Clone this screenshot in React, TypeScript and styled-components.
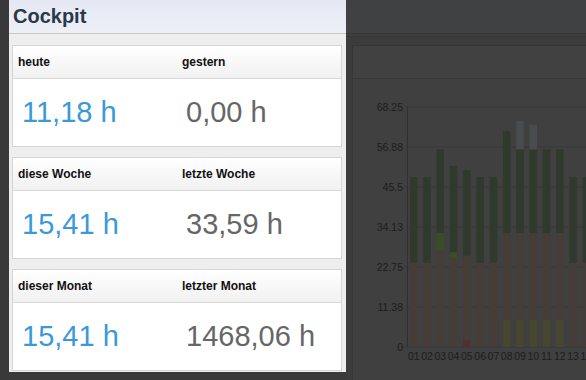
import styled, { createGlobalStyle } from 'styled-components';

const GlobalStyle = createGlobalStyle`
  html, body {
    margin: 0;
    padding: 0;
    background: #3a3a3a;
  }
  body {
    font-family: 'Liberation Sans', Arial, Helvetica, sans-serif;
  }
`;

interface Stat {
  label: string;
  value: string;
}

interface Pair {
  current: Stat;
  previous: Stat;
}

const stats: Pair[] = [
  { current: { label: 'heute', value: '11,18 h' }, previous: { label: 'gestern', value: '0,00 h' } },
  { current: { label: 'diese Woche', value: '15,41 h' }, previous: { label: 'letzte Woche', value: '33,59 h' } },
  { current: { label: 'dieser Monat', value: '15,41 h' }, previous: { label: 'letzter Monat', value: '1468,06 h' } },
];

// bar segments from the bottom up: [value, colour]
type Segment = [number, string];

const GREEN = '#2f392c';
const LIGHT_GREEN = '#3a4d25';
const ORANGE = '#463d38';
const YELLOW = '#47462f';
const RED = '#552f2d';
const GREY = '#494c4f';

const bars: Segment[][] = [
  [[24, ORANGE], [24.3, GREEN]],
  [[24, ORANGE], [24.3, GREEN]],
  [[27.6, ORANGE], [4.8, LIGHT_GREEN], [23.8, GREEN]],
  [[25.3, ORANGE], [1.7, LIGHT_GREEN], [24.5, GREEN]],
  [[2, RED], [24, ORANGE], [24.3, GREEN]],
  [[24, ORANGE], [24.3, GREEN]],
  [[24, ORANGE], [24.3, GREEN]],
  [[7.7, YELLOW], [24.7, ORANGE], [29, GREEN]],
  [[7.7, YELLOW], [24.7, ORANGE], [23.8, GREEN], [8.1, GREY]],
  [[7.7, YELLOW], [24.7, ORANGE], [23.8, GREEN], [7, GREY]],
  [[7.7, YELLOW], [24.7, ORANGE], [23.8, GREEN]],
  [[7.7, YELLOW], [24.7, ORANGE], [23.8, GREEN]],
  [[24, ORANGE], [24.3, GREEN]],
  [[24, ORANGE], [24.3, GREEN]],
];

const ticks = ['0', '11.38', '22.75', '34.13', '45.5', '56.88', '68.25'];

const ZERO_Y = 347;
const PX_PER_UNIT = 240 / 68.25;
const BAR_X = 410;
const BAR_STEP = 13.28;
const BAR_W = 7.5;

const Chart = () => {
  return (
    <ChartSvg width={240} height={301} viewBox="353 79 240 301">
      {ticks.map((t, i) => {
        const y = ZERO_Y - i * 40;
        return (
          <g key={t}>
            <line x1={404} x2={593} y1={y} y2={y} stroke="#393939" strokeWidth={1} />
            <text x={403} y={y + 3.5} textAnchor="end" fontSize={10.5} fill="#1c1c1c">
              {t}
            </text>
          </g>
        );
      })}
      <line x1={407.5} x2={407.5} y1={107} y2={ZERO_Y} stroke="#2f2f2f" strokeWidth={1} />
      {bars.map((segments, i) => {
        const x = BAR_X + i * BAR_STEP;
        let base = 0;
        return (
          <g key={i}>
            {segments.map(([v, colour], j) => {
              const yTop = ZERO_Y - (base + v) * PX_PER_UNIT;
              const h = v * PX_PER_UNIT;
              base += v;
              return <rect key={j} x={x} y={yTop} width={BAR_W} height={h} fill={colour} />;
            })}
            <text x={x + BAR_W / 2} y={360} textAnchor="middle" fontSize={10.5} fill="#1c1c1c">
              {String(i + 1).padStart(2, '0')}
            </text>
          </g>
        );
      })}
    </ChartSvg>
  );
};

const Card = ({ pair }: { pair: Pair }) => (
  <CardBox>
    <CardHead>
      <HeadCell>{pair.current.label}</HeadCell>
      <HeadCell>{pair.previous.label}</HeadCell>
    </CardHead>
    <CardBody>
      <Value $current>{pair.current.value}</Value>
      <Value>{pair.previous.value}</Value>
    </CardBody>
  </CardBox>
);

const App = () => {
  return (
    <>
      <GlobalStyle />
      <Page>
        <Strip />
        <Panel>
          <PanelHeader>
            <Title>Cockpit</Title>
          </PanelHeader>
          <PanelBody>
            {stats.map((pair) => (
              <Card key={pair.current.label} pair={pair} />
            ))}
          </PanelBody>
        </Panel>
        <Backdrop>
          <TopBar />
          <BackdropBody>
            <DimPanel>
              <DimPanelHead />
              <Chart />
            </DimPanel>
          </BackdropBody>
        </Backdrop>
      </Page>
    </>
  );
};

export default App;

const Page = styled.div`
  display: flex;
  width: 586px;
  height: 380px;
  overflow: hidden;
  background: #3a3a3a;
`;

const Strip = styled.div`
  width: 9px;
  flex-shrink: 0;
  background: #393939;
`;

const Panel = styled.div`
  width: 337px;
  flex-shrink: 0;
  align-self: flex-start;
  display: flex;
  flex-direction: column;
  background: #eeeeee;
`;

const PanelHeader = styled.div`
  height: 33px;
  display: flex;
  align-items: center;
  padding-left: 4px;
  background: linear-gradient(#e5e8f3, #eef0f8);
  border-bottom: 1px solid #c8c8c8;
`;

const Title = styled.h1`
  margin: 0;
  font-size: 20px;
  font-weight: bold;
  color: #2a3849;
  line-height: 1;
  margin-top: -1px;
`;

const PanelBody = styled.div`
  display: flex;
  flex-direction: column;
  gap: 10px;
  padding: 11px 4px 1px 3px;
`;

const CardBox = styled.div`
  background: #ffffff;
  border: 1px solid #d6d6d6;
`;

const CardHead = styled.div`
  display: grid;
  grid-template-columns: 164px 1fr;
  height: 32px;
  align-items: center;
  background: linear-gradient(#ffffff, #f1f1f1);
  border-bottom: 1px solid #d9d9d9;
`;

const HeadCell = styled.div`
  padding-left: 5px;
  font-size: 12px;
  font-weight: bold;
  color: #111111;
`;

const CardBody = styled.div`
  display: grid;
  grid-template-columns: 164px 1fr;
  height: 67px;
  align-items: center;
`;

const Value = styled.div<{ $current?: boolean }>`
  padding-left: 9px;
  font-size: 29px;
  color: ${(p) => (p.$current ? '#3b99d9' : '#666666')};
`;

const Backdrop = styled.div`
  flex: 1;
  display: flex;
  flex-direction: column;
  background: #3c3c3c;
  min-width: 0;
`;

const TopBar = styled.div`
  height: 33px;
  flex-shrink: 0;
  background: #404143;
  border-bottom: 1px solid #363636;
  box-shadow: 0 2px 0 #3e3e3e, 0 3px 0 #363636;
`;

const BackdropBody = styled.div`
  flex: 1;
  padding: 11px 0 0 6px;
  display: flex;
`;

const DimPanel = styled.div`
  width: 260px;
  flex-shrink: 0;
  display: flex;
  flex-direction: column;
  background: #404040;
  border: 1px solid #363636;
`;

const DimPanelHead = styled.div`
  height: 32px;
  flex-shrink: 0;
  background: #414141;
  border-bottom: 1px solid #383838;
`;

const ChartSvg = styled.svg`
  display: block;
  font-family: 'Liberation Sans', Arial, Helvetica, sans-serif;
`;
